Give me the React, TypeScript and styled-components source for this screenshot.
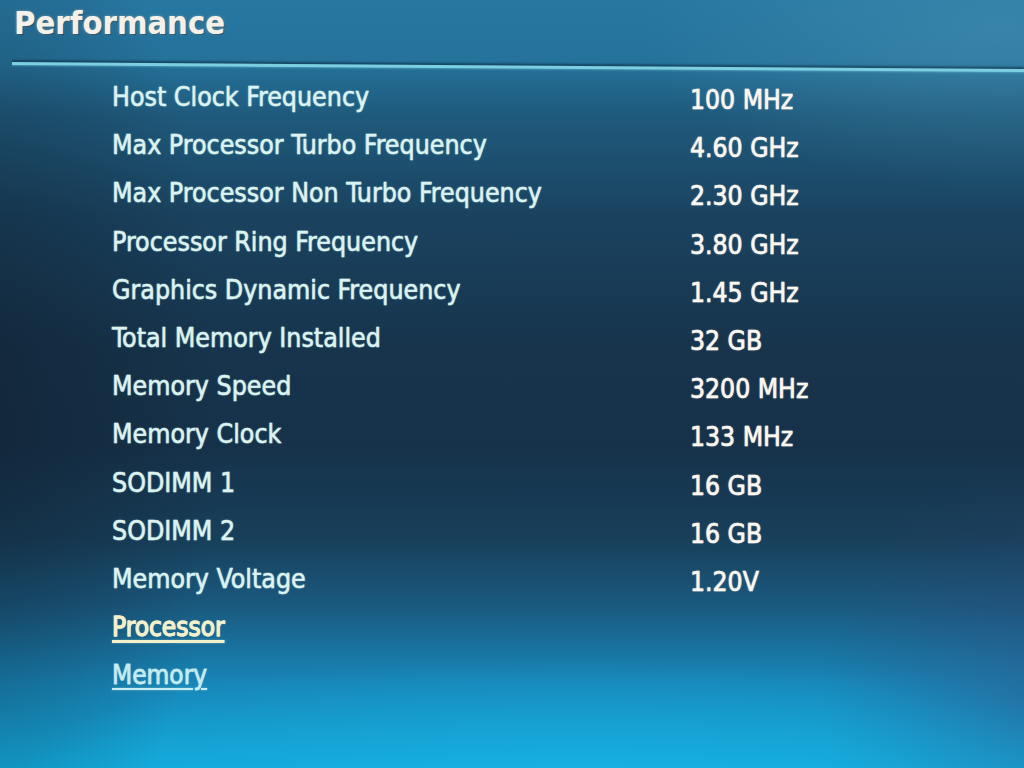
import React from 'react';
import styled, { createGlobalStyle } from 'styled-components';

const GlobalStyle = createGlobalStyle`
  html, body {
    margin: 0;
    padding: 0;
    width: 1024px;
    height: 768px;
    overflow: hidden;
  }
`;

const Screen = styled.div`
  width: 1024px;
  height: 768px;
  overflow: hidden;
  font-family: "DejaVu Sans", "Liberation Sans", sans-serif;
  font-stretch: condensed;
  background:
    radial-gradient(ellipse 560px 120px at 580px 775px, rgba(25, 180, 230, 0.55), rgba(25, 180, 230, 0) 100%),
    radial-gradient(ellipse 260px 560px at -40px 400px, rgba(12, 22, 36, 0.45), rgba(12, 22, 36, 0) 100%),
    radial-gradient(ellipse 220px 240px at 1040px 700px, rgba(55, 65, 115, 0.35), rgba(55, 65, 115, 0) 100%),
    radial-gradient(ellipse 360px 160px at 1000px 30px, rgba(90, 160, 190, 0.35), rgba(90, 160, 190, 0) 100%),
    linear-gradient(
      180deg,
      #2777a1 0%,
      #25729b 8%,
      #1f5a7c 15%,
      #1a4360 28%,
      #17344c 45%,
      #16324a 58%,
      #183f5a 70%,
      #1a5a80 79%,
      #1886b8 89%,
      #13aadb 100%
    );
`;

const Header = styled.header`
  padding: 0 0 0 14px;
  height: 62px;
  display: flex;
  align-items: flex-start;
`;

const Title = styled.h1`
  margin: 0;
  padding-top: 2px;
  font-size: 32.5px;
  font-weight: bold;
  line-height: 42px;
  color: #f4f1ea;
  text-shadow: 0 0 3px rgba(255, 230, 200, 0.4), 1px 1px 1px rgba(0, 20, 40, 0.5);
`;

const Rule = styled.div`
  margin-left: 12px;
  height: 3px;
  background: #7ccfe0;
  box-shadow: 0 -2px 2px rgba(10, 40, 60, 0.6), 0 1px 2px rgba(120, 210, 230, 0.4);
  transform-origin: left center;
  transform: rotate(0.4deg);
`;

const Table = styled.div`
  display: grid;
  grid-template-columns: 578px auto;
  grid-auto-rows: 48.2px;
  padding: 8px 0 0 112px;
`;

const Label = styled.div`
  font-size: 26.5px;
  line-height: 48px;
  color: #dcf3f2;
  -webkit-text-stroke: 0.5px #dcf3f2;
  text-shadow: 0 0 2px rgba(200, 255, 240, 0.45);
  white-space: nowrap;
`;

const Value = styled.div`
  font-size: 26.3px;
  line-height: 48px;
  padding-top: 3px;
  color: #fbf8f2;
  -webkit-text-stroke: 0.6px #fbf8f2;
  text-shadow: 0 0 2px rgba(255, 240, 220, 0.5);
  white-space: nowrap;
`;

const LinkRow = styled.div`
  grid-column: 1 / span 2;
  line-height: 48px;
`;

const Link = styled.span<{ $selected?: boolean }>`
  font-size: 26px;
  color: ${(p) => (p.$selected ? '#f3f0cc' : '#c4ecf2')};
  -webkit-text-stroke: ${(p) => (p.$selected ? '0.8px #f3f0cc' : '0.4px #c4ecf2')};
  text-decoration: underline;
  text-decoration-thickness: ${(p) => (p.$selected ? '3px' : '2px')};
  text-underline-offset: 4px;
  text-shadow: 0 0 2px rgba(220, 240, 220, 0.4);
`;

const rows: [string, string][] = [
  ['Host Clock Frequency', '100 MHz'],
  ['Max Processor Turbo Frequency', '4.60 GHz'],
  ['Max Processor Non Turbo Frequency', '2.30 GHz'],
  ['Processor Ring Frequency', '3.80 GHz'],
  ['Graphics Dynamic Frequency', '1.45 GHz'],
  ['Total Memory Installed', '32 GB'],
  ['Memory Speed', '3200 MHz'],
  ['Memory Clock', '133 MHz'],
  ['SODIMM 1', '16 GB'],
  ['SODIMM 2', '16 GB'],
  ['Memory Voltage', '1.20V'],
];

export default function App() {
  return (
    <>
      <GlobalStyle />
      <Screen>
        <Header>
          <Title>Performance</Title>
        </Header>
        <Rule />
        <Table>
          {rows.map(([label, value]) => (
            <React.Fragment key={label}>
              <Label>{label}</Label>
              <Value>{value}</Value>
            </React.Fragment>
          ))}
          <LinkRow>
            <Link $selected>Processor</Link>
          </LinkRow>
          <LinkRow>
            <Link>Memory</Link>
          </LinkRow>
        </Table>
      </Screen>
    </>
  );
}
